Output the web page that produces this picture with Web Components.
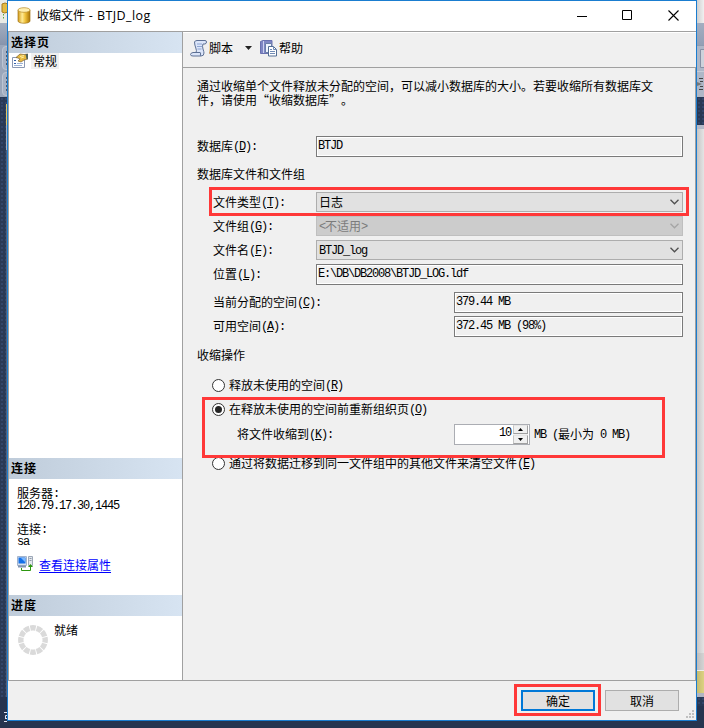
<!DOCTYPE html>
<html lang="zh-CN">
<head>
<meta charset="utf-8">
<title>收缩文件 - BTJD_log</title>
<style>
html,body{margin:0;width:704px;height:728px;overflow:hidden;background:#293955}
body{font:12px/14px "Noto Sans CJK SC",sans-serif;color:#000;font-kerning:none;text-spacing-trim:space-all}
</style>
</head>
<body>
<shrink-app></shrink-app>
<script>
const define = (name, html, init) => {
  const t = document.createElement('template');
  t.innerHTML = html;
  customElements.define(name, class extends HTMLElement {
    connectedCallback() {
      if (this.shadowRoot) return;
      this.attachShadow({ mode: 'open' }).appendChild(t.content.cloneNode(true));
      if (init) init(this, this.shadowRoot);
    }
  });
};

/* Text on a half-width/full-width cell grid; "&" marks the mnemonic letter. */
define('grid-text', `<style>
:host{display:inline-block;white-space:pre;line-height:14px;height:14px;flex:none}
.m{font:12px/1px "Liberation Mono",monospace;letter-spacing:-1.2px;vertical-align:1px}
u{text-underline-offset:1px;text-decoration-thickness:1px}
</style><span id="t"></span>`, (el, r) => {
  const s = el.getAttribute('t'), out = r.getElementById('t');
  for (const run of s.match(/[\x20-\x7e]+|[^\x20-\x7e]+/g)) {
    if (run.charCodeAt(0) > 126) { out.append(run); continue; }
    const m = document.createElement('span');
    m.className = 'm';
    const i = run.indexOf('&');
    if (i < 0) m.textContent = run;
    else {
      const u = document.createElement('u');
      u.textContent = run[i + 1];
      m.append(run.slice(0, i), u, run.slice(i + 2));
    }
    out.append(m);
  }
});

define('text-field', `<style>
:host{display:flex;box-sizing:border-box;height:21px;border:1px solid #7a7a7a;box-shadow:inset 0 0 0 1px #fff;background:#f0f0f0;padding:1px 0 0 1px;flex:none}
</style><slot></slot>`);

define('combo-box', `<style>
:host{display:flex;box-sizing:border-box;height:20px;border:1px solid #adadad;background:#e1e1e1;padding:0 3px 0 2px;align-items:center;justify-content:space-between;flex:none;color:#000;--c:#505050}
:host([disabled]){background:#ccc;border-color:#bfbfbf;color:#7b7b7b;--c:#a5a5a5}
path{stroke:var(--c)}
</style><slot></slot><svg width="9" height="6" viewBox="0 0 9 6"><path d="M.5 .8L4.5 4.8L8.5 .8" fill="none" stroke-width="1.3"/></svg>`);

define('radio-option', `<style>
:host{display:flex;height:14px;align-items:center;gap:4px}
i{box-sizing:border-box;width:13px;height:13px;border:1px solid #333;border-radius:50%;background:#fff;display:grid;place-items:center;flex:none}
:host([checked]) i::after{content:"";width:7px;height:7px;border-radius:50%;background:#262626}
</style><i></i><slot></slot>`);

define('number-spinner', `<style>
:host{display:flex;box-sizing:border-box;width:76px;height:21px;border:1px solid #abadb3;background:#fff;justify-content:flex-end;gap:1px;flex:none;padding-right:1px}
grid-text{margin:0 1px 0 0}
.b{display:grid;grid-template-rows:9px 9px;width:15px;gap:1px;background:#f0f0f0}
.b span{border:1px solid;border-color:#e5e5e5 #a0a0a0 #a0a0a0 #c6c6c6;display:grid;place-items:center;box-sizing:border-box}
svg{display:block}
</style><grid-text t="10"></grid-text><div class="b"><span><svg width="5" height="3"><path d="M0 3L2.5 0L5 3z"/></svg></span><span><svg width="5" height="3"><path d="M0 0L2.5 3L5 0z"/></svg></span></div>`);

define('push-button', `<style>
:host{display:grid;place-items:center;box-sizing:border-box;width:74px;height:21px;border:1px solid #adadad;background:#e1e1e1;flex:none}
:host([default]){border:2px solid #0078d7}
</style><slot></slot>`);

define('form-row', `<style>
:host{display:flex;align-items:center;box-sizing:border-box;height:24px}
.l{width:var(--lw,103px);flex:none;display:flex}
</style><div class="l"><slot name="label"></slot></div><slot></slot>`);

define('panel-header', `<style>
:host{display:flex;align-items:center;box-sizing:border-box;height:21px;padding:0 0 2px 2px;background:linear-gradient(90deg,#bfccda,#d7e4f2);font-weight:700;letter-spacing:1px;flex:none}
</style><slot></slot>`);

define('mark-box', `<style>
:host{position:absolute;box-sizing:border-box;border:3px solid #ff3838;pointer-events:none}
</style>`);

define('title-bar', `<style>
:host{display:flex;box-sizing:border-box;height:31px;background:#fff;border-bottom:1px solid #a0a0a0;align-items:center;padding:0 17px 1px 9px;flex:none}
.t{font:12px/16px "Open Sans","Noto Sans CJK SC",sans-serif;margin-left:6px;flex:1;white-space:pre}
.t span{font-size:12.5px;letter-spacing:.45px}
.c{display:flex;gap:35px;align-items:center}
svg{display:block}
</style>
<svg width="14" height="17" viewBox="0 0 14 17"><defs><linearGradient id="g"><stop offset="0" stop-color="#d29a17"/><stop offset=".35" stop-color="#ffeb96"/><stop offset=".6" stop-color="#f0c23c"/><stop offset="1" stop-color="#a87405"/></linearGradient></defs><path d="M1 3v11c0 3 12 3 12 0V3z" fill="url(#g)" stroke="#a4771b" stroke-width=".7"/><ellipse cx="7" cy="3" rx="6" ry="2.3" fill="#ffefb0" stroke="#b88a24" stroke-width=".7"/></svg>
<div class="t">收缩文件<span> - BTJD_log</span></div>
<div class="c">
<svg width="10" height="10"><path d="M0 5.5H10" stroke="#000"/></svg>
<svg width="11" height="11"><path d="M.5 .5h9v9h-9z" fill="none" stroke="#000"/></svg>
<svg width="11" height="11"><path d="M.5 .5l10 10M10.5 .5l-10 10" stroke="#000" stroke-width="1.1"/></svg>
</div>`);

define('side-panel', `<style>
:host{display:flex;flex-direction:column;box-sizing:border-box;width:175px;background:#fff;border:solid #a0a0a0;border-width:0 1px 0 1px;flex:none}
.pages{height:405px;flex:none}
.item{display:flex;gap:3px;padding-left:3px}
.item b{font-weight:400;background:#f0f0f0;padding:1px 2px;height:14px;width:24px}
.conn{height:116px;box-sizing:border-box;padding:7px 0 0 8px;display:flex;flex-direction:column;flex:none}
.conn grid-text{height:12px;line-height:14px}
.gap{margin-top:12px}
.link{display:flex;margin-top:10px;gap:6px;align-items:center}
.link span{color:#00f;text-decoration:underline;text-underline-offset:2px;padding-top:1px}
.prog{display:flex;padding:7px 0 0 9px;gap:6px}
.prog svg{margin-top:2px}
</style>
<panel-header>选择页</panel-header>
<div class="pages"><div class="item"><svg width="16" height="16" viewBox="0 0 16 16"><path d="M.5 4.5h12v10H.5z" fill="#fff" stroke="#8b98b3"/><path d="M2 7h2v1H2zM2 10h2v1H2z" fill="#345fa8"/><path d="M5 10.5h6M2 12.5h8" stroke="#9cb2d5"/><path d="M4 4.5L8 1l4 .5L16 1v5l-4 1-3 2-3-1 2-2-2-1z" fill="#e7b93e" stroke="#7d6233" stroke-width=".7"/><path d="M8 3.5l4-1M9 5l3-1" stroke="#fff0a0"/><path d="M13.500 1H16v5h-1.500z" fill="#52635a"/></svg><b>常规</b></div></div>
<panel-header>连接</panel-header>
<div class="conn"><grid-text t="服务器:"></grid-text><grid-text t="120.79.17.30,1445"></grid-text><grid-text class="gap" t="连接:"></grid-text><grid-text t="sa"></grid-text>
<div class="link"><svg width="16" height="16" viewBox="0 0 16 16"><path d="M.5 .5h9v9h-9z" fill="#d8e1ee" stroke="#a3b4cd"/><path d="M1.500 1.500h7v6h-7z" fill="#1470e8"/><path d="M4 2h4v4z" fill="#7ab8ff"/><path d="M1 10.500h8" stroke="#8194b0" stroke-width="2"/><path d="M11.5 .5h4v9h-4z" fill="#e4e8ed" stroke="#9da8b8"/><path d="M12.5 2.5h2M12.5 4.5h2" stroke="#8d98a8"/><path d="M4.5 12v2.500h9V10" fill="none" stroke="#2c970f"/><path d="M11 11l2.500-3L16 11z" fill="#2c970f"/></svg><span>查看连接属性</span></div></div>
<panel-header>进度</panel-header>
<div class="prog"><svg width="30" height="30" viewBox="0 0 30 30"><circle cx="15" cy="15" r="12.2" fill="none" stroke="#dadada" stroke-width="5.400" pathLength="120" stroke-dasharray="8.600 1.400" stroke-dashoffset="4.300"/></svg><span>就绪</span></div>`);

define('tool-bar', `<style>
:host{display:flex;box-sizing:border-box;height:36px;border-top:1px solid #fff;border-bottom:1px solid #a0a0a0;align-items:center;padding:0 0 4px 7px;flex:none}
svg{display:block;flex:none}
.a{margin:0 8px 0 12px}
span{margin-left:2px;flex:none}
</style>
<svg width="17" height="17" viewBox="0 0 17 17"><path d="M4.500 2Q5 .5 7 .5h8q1.500 0 1.500 1.500T15 4h-2q-1 2 0 5t1 4q0 3-3 3H3q-2.500 0-2.500-1.500T3 12.500h3Q7 11 5.800 8T4.500 2z" fill="#dbe5f9" stroke="#5d7094"/><path d="M7 4h5M7 6.500h5M7.500 9h4" stroke="#8fa6d2"/><path d="M3 12.500h7q1 0 .5 1.500T11 16" fill="none" stroke="#5d7094"/></svg>
<span>脚本</span><svg class="a" width="7" height="4"><path d="M0 0h7L3.500 4z" fill="#222"/></svg>
<svg width="17" height="17" viewBox="0 0 17 17"><path d="M.5 1.500L3 .5h9v13H.5z" fill="#7f86c4" stroke="#6a71b0"/><path d="M3.500 1v12" stroke="#cdd1f0"/><path d="M5.500 3.500h6v9h-6z" fill="#f0f4ff" stroke="#6a7fa8"/><path d="M8.500 6.500h5l3 3v6.500h-8z" fill="#fff" stroke="#526c93"/><path d="M13.500 6.500v3h3M10 9.500h2M10 11.500h5M10 13.500h5" fill="none" stroke="#718bb5"/></svg>
<span>帮助</span>`);

define('shrink-form', `<style>
:host{display:block;flex:1;box-sizing:border-box;padding:11px 12px 0 14px}
p{margin:0;height:28px;white-space:pre}
.h{height:14px}
.in{padding-left:16px}
.w{width:367px}.n{width:229px}
.ops{padding-left:15px}
.mb{margin-left:4px}
</style>
<p>通过收缩单个文件释放未分配的空间，可以减小数据库的大小。若要收缩所有数据库文
件，请使用“收缩数据库”。</p>
<form-row style="--lw:119px;margin-top:27px"><grid-text slot="label" t="数据库(&D):"></grid-text><text-field class="w"><grid-text t="BTJD"></grid-text></text-field></form-row>
<div class="h" style="margin-top:9px">数据库文件和文件组</div>
<div class="in" style="margin-top:9px">
<form-row><grid-text slot="label" t="文件类型(&T):"></grid-text><combo-box class="w"><grid-text t="日志"></grid-text></combo-box></form-row>
<form-row><grid-text slot="label" t="文件组(&G):"></grid-text><combo-box class="w" disabled><grid-text t="<不适用>"></grid-text></combo-box></form-row>
<form-row><grid-text slot="label" t="文件名(&F):"></grid-text><combo-box class="w"><grid-text t="BTJD_log"></grid-text></combo-box></form-row>
<form-row><grid-text slot="label" t="位置(&L):"></grid-text><text-field class="w"><grid-text t="E:\\DB\\DB2008\\BTJD_LOG.ldf"></grid-text></text-field></form-row>
<form-row style="--lw:241px;margin-top:4px"><grid-text slot="label" t="当前分配的空间(&C):"></grid-text><text-field class="n"><grid-text t="379.44 MB"></grid-text></text-field></form-row>
<form-row style="--lw:241px"><grid-text slot="label" t="可用空间(&A):"></grid-text><text-field class="n"><grid-text t="372.45 MB (98%)"></grid-text></text-field></form-row>
</div>
<div class="h" style="margin-top:10px">收缩操作</div>
<div class="ops" style="margin-top:16px">
<radio-option><grid-text t="释放未使用的空间(&R)"></grid-text></radio-option>
<radio-option checked style="margin-top:10px"><grid-text t="在释放未使用的空间前重新组织页(&O)"></grid-text></radio-option>
<form-row style="--lw:217px;padding-left:25px;margin-top:6px"><grid-text slot="label" t="将文件收缩到(&K):"></grid-text><number-spinner></number-spinner><grid-text class="mb" t="MB (最小为 0 MB)"></grid-text></form-row>
<radio-option style="margin-top:10px"><grid-text t="通过将数据迁移到同一文件组中的其他文件来清空文件(&E)"></grid-text></radio-option>
</div>`);

define('shrink-dialog', `<style>
:host{display:flex;flex-direction:column;box-sizing:border-box;width:690px;height:721px;border:1px solid #1a7dd0;background:#f0f0f0}
.main{display:flex;height:649px;box-sizing:border-box;border-bottom:1px solid #a0a0a0;flex:none}
.r{flex:1;display:flex;flex-direction:column;min-width:0}
.f{flex:1;display:flex;border-right:1px solid #a0a0a0}
.foot{flex:1;display:flex;justify-content:flex-end;align-items:flex-start;padding-top:9px}
.foot push-button+push-button{margin-left:10px}
.grip{margin:20px 2px 0 7px}
</style>
<title-bar></title-bar>
<div class="main"><side-panel></side-panel><div class="r"><tool-bar></tool-bar><div class="f"><shrink-form></shrink-form></div></div></div>
<div class="foot"><push-button default>确定</push-button><push-button>取消</push-button><svg class="grip" width="8" height="8"><path d="M6 0h2v2H6zM3 3h2v2H3zM6 3h2v2H6zM0 6h2v2H0zM3 6h2v2H3zM6 6h2v2H6z" fill="#bfbfbf"/></svg></div>`);

/* Slivers of the main application window showing on both sides of the dialog. */
define('desk-edge', `<style>
:host{display:flex;flex-direction:column;width:7px;height:728px;overflow:hidden}
</style><slot></slot>`);

define('shrink-app', `<style>
:host{display:flex;justify-content:space-between;position:relative;width:704px;height:728px;background:#26344f}
desk-edge div{flex:none;box-sizing:border-box}
.navy{background:#293955 radial-gradient(#32456a 25%,transparent 30%) 0 0/4px 4px}
.bar{background:#9aa6ba;padding:1px 0 1px 2px}
.bar i{display:block;box-sizing:border-box;height:24px;width:10px;border:1px solid #bcc5d3;border-radius:4px;background:#a7b1c3;padding:4px 0 0 3px}
.bar i::after{content:"";display:block;width:2px;height:14px;background:repeating-linear-gradient(#4e5a70 0 2px,transparent 2px 4px)}
shrink-dialog{position:absolute;left:7px;top:0}
</style>
<desk-edge>
<div style="height:23px;background:#e9eae5"><svg width="7" height="21"><path d="M2 4q3-2 6 0v8q-4 2-6 0z" fill="#e4bb40" stroke="#a87c20"/><path d="M3.500 14v6" stroke="#58a638" stroke-dasharray="1.500 1.500"/></svg></div>
<div style="height:22px;background:linear-gradient(#a3aec0,#8794ac)"></div>
<div class="bar" style="height:26px"><i></i></div><div class="bar" style="height:26px"><i></i></div>
<div class="navy" style="height:7px"></div>
<div class="navy" style="height:21px;border-right:1px solid #e5c565"></div>
<div class="navy" style="height:25px;border-right:1px solid #a8b0bd"></div>
<div class="navy" style="height:547px;border-right:1px solid #56617a"></div>
<div style="height:31px"><svg width="7" height="31"><path d="M4 15.500h3M5.500 22v-3.500H7M5.500 21.500H7M4 24.500h3" fill="none" stroke="#dfe4f2"/></svg></div>
</desk-edge>
<desk-edge>
<div style="height:23px;background:linear-gradient(90deg,#d0d0d0,#f0f0f0)"></div>
<div style="height:22px;background:linear-gradient(#a3aec0,#939fb5)"></div>
<div style="height:26px;background:#aeb7c7;padding:3px 0 0 2px;border-top:1px solid #8f9bb0"><svg width="6" height="20"><path d="M8 .5H1.500v18H8" fill="#cdd2db" stroke="#8791a5"/></svg></div>
<div style="height:26px;background:#aeb7c7;padding-top:5px;border-top:1px solid #c6cdd8"><svg width="7" height="14"><path d="M2 1.500h4M3 4.500h3M3 9.500h3M2 12.500h4" stroke="#444"/><path d="M0 5l5 2-5 2z" fill="#777"/></svg></div>
<div class="navy" style="height:28px"></div>
<div style="height:4px;background:#b5b9c8"></div>
<div style="height:524px;background:linear-gradient(90deg,#c6c6c6,#e4e4e4)"></div>
<div style="height:17px;background:linear-gradient(90deg,#bdbdbd,#d4d4d4)"></div>
<div style="height:1px;background:#eee"></div>
<div style="height:22px;background:linear-gradient(90deg,#c5bb70,#dcd282)"></div>
<div style="height:4px;background:#b0b5c2"></div>
<div class="navy" style="height:9px"></div>
</desk-edge>
<shrink-dialog></shrink-dialog>
<mark-box style="left:209px;top:187px;width:480px;height:29px"></mark-box>
<mark-box style="left:202px;top:397px;width:463px;height:61px"></mark-box>
<mark-box style="left:514px;top:684px;width:87px;height:32px"></mark-box>`);
</script>
</body>
</html>
